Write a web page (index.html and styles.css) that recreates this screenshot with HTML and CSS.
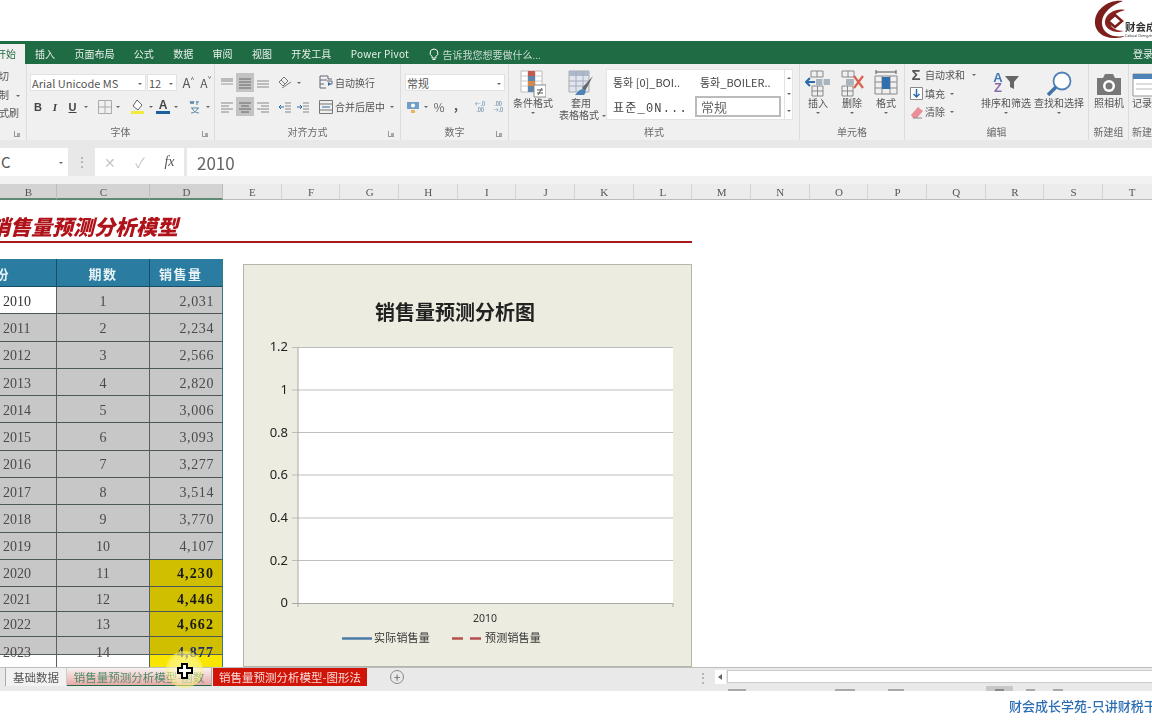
FILE: index.html
```html
<!DOCTYPE html>
<html lang="zh-CN">
<head>
<meta charset="utf-8">
<title>销售量预测分析模型</title>
<link rel="stylesheet" href="styles.css">
</head>
<body>
<div class="page">
  <header class="topbar">
    <div class="logo">
      <svg width="34" height="40" viewBox="0 0 34 40"><path d="M29 1C16-1 2 8 1 21c-1 10 8 18 21 17 4 0 7-1 9-2-12 2-22-2-23-12C7 14 17 5 29 1z" fill="#7c1f1c"/><path d="M31 10C21 8 12 14 11 21c-1 6 5 11 14 11l5-1c-7 0-14-3-14-9 0-5 7-10 15-12z" fill="#8a2320"/><path d="M21 15l7 6-7 6-7-6z" fill="none" stroke="#7c1f1c" stroke-width="2.5"/></svg>
      <div class="logo-text"><span class="logo-cn">财会成</span><span class="logo-en">Caikuai Chengzhang</span></div>
    </div>
  </header>

  <nav class="tabs">
    <span class="tab active">开始</span>
    <span class="tab">插入</span><span class="tab">页面布局</span><span class="tab">公式</span><span class="tab">数据</span><span class="tab">审阅</span><span class="tab">视图</span><span class="tab">开发工具</span><span class="tab">Power Pivot</span>
    <span class="tell">
      <svg width="10" height="13" viewBox="0 0 10 13"><path d="M5 1a4 4 0 0 0-2 7.400V10h4V8.400A4 4 0 0 0 5 1zM3.500 11.500h3" fill="none" stroke="#fff" stroke-width="1"/></svg>
      告诉我您想要做什么...
    </span>
    <span class="login">登录</span>
  </nav>

  <section class="ribbon">
    <div class="grp g-clip">
      <div class="clip-list"><span>切</span><span>制<i class="caret cl"></i></span><span>式刷</span></div>
      <i class="launch"></i>
    </div>

    <div class="grp g-font">
      <div class="body pl3">
        <div class="row">
          <span class="select w116">Arial Unicode MS<i class="caret"></i></span>
          <span class="select w30">12<i class="caret"></i></span>
          <span class="b w21 big">A<sup>^</sup></span>
          <span class="b w14 mid">A<sup>ˇ</sup></span>
        </div>
        <div class="row">
          <span class="b w16 bold">B</span><span class="b w18 ital">I</span><span class="b w17 under">U</span><i class="b w10 caret"></i>
          <span class="w6"></span>
          <span class="b w16"><svg width="14" height="14" viewBox="0 0 14 14"><path d="M.5.500h13v13H.5zM7 .5v13M.5 7h13" fill="none" stroke="#aaa"/></svg></span><i class="b w10 caret"></i>
          <span class="w7"></span>
          <span class="b w16"><svg width="16" height="16" viewBox="0 0 16 16"><path d="M7 1l5 5-4 5-5-4z" fill="#fff" stroke="#666"/><path d="M1 12h13v3H1z" fill="#f2ea3a"/></svg></span><i class="b w9 caret"></i>
          <span class="b w16"><svg width="14" height="16" viewBox="0 0 14 16"><text x="7" y="10" text-anchor="middle" class="svg-a">A</text><path d="M0 12h14v3H0z" fill="#1f5f9e"/></svg></span><i class="b w10 caret"></i>
          <span class="w6"></span>
          <span class="b w16 wen"><svg width="14" height="15" viewBox="0 0 14 15"><path d="M2 2l1 3 1-3 1 3 1-3M9 2v4M8 3h3M3 9h8M4 9c1 3 4 5 7 5M10 9c-1 3-4 5-7 5" fill="none" stroke="#5b87a8"/></svg></span><i class="b w10 caret"></i>
        </div>
      </div>
      <div class="label">字体</div><i class="launch"></i>
    </div>

    <div class="grp g-align">
      <div class="body pl3">
        <div class="row">
          <span class="b w18"><svg class="al" viewBox="0 0 14 12"><path d="M1 1h12v4H1z" fill="#bbb"/><path d="M1 7h12" stroke="#999"/></svg></span>
          <span class="b w18 on"><svg class="al" viewBox="0 0 14 12"><path d="M1 2h12M1 5h12M1 8h12M1 11h12" stroke="#666"/></svg></span>
          <span class="b w18"><svg class="al" viewBox="0 0 14 12"><path d="M1 4h12M1 7h12M1 10h12" stroke="#888"/></svg></span>
          <span class="w4"></span>
          <span class="b w18"><svg width="14" height="14" viewBox="0 0 14 14"><path d="M1 6l5-5 4 4-5 5zM4 12l9-6M3 4l4 4" fill="none" stroke="#777"/></svg></span><i class="b w10 caret"></i>
          <span class="w14"></span>
          <span class="b w16"><svg width="14" height="15" viewBox="0 0 14 15"><path d="M1 1h8v3h4M1 5h7M1 9h4M1 13h6M1 1v12M8 6h5v3H9" fill="none" stroke="#667"/><path d="M9 7l3 2-3 2z" fill="#2b6ca8"/></svg></span>
          <span class="txt">自动换行</span>
        </div>
        <div class="row">
          <span class="b w18"><svg class="al" viewBox="0 0 14 12"><path d="M1 2h12M1 5h8M1 8h12M1 11h8" stroke="#888"/></svg></span>
          <span class="b w18 on"><svg class="al" viewBox="0 0 14 12"><path d="M1 2h12M3 5h8M1 8h12M3 11h8" stroke="#666"/></svg></span>
          <span class="b w18"><svg class="al" viewBox="0 0 14 12"><path d="M1 2h12M5 5h8M1 8h12M5 11h8" stroke="#888"/></svg></span>
          <span class="w4"></span>
          <span class="b w18"><svg class="al" viewBox="0 0 14 12"><path d="M7 2h6M7 5h6M7 8h6M7 11h6" stroke="#888"/><path d="M6 6H1M3 4L1 6l2 2" fill="none" stroke="#2b6ca8"/></svg></span>
          <span class="b w18"><svg class="al" viewBox="0 0 14 12"><path d="M7 2h6M7 5h6M7 8h6M7 11h6" stroke="#888"/><path d="M1 6h5M4 4l2 2-2 2" fill="none" stroke="#2b6ca8"/></svg></span>
          <span class="w6"></span>
          <span class="b w16"><svg width="14" height="14" viewBox="0 0 14 14"><path d="M.5.500h13v13H.5zM.5 4h13M.5 10h13" fill="none" stroke="#777"/><path d="M3 7h8" stroke="#2b6ca8"/></svg></span>
          <span class="txt">合并后居中</span><i class="b w14 caret"></i>
        </div>
      </div>
      <div class="label">对齐方式</div><i class="launch"></i>
    </div>

    <div class="grp g-num">
      <div class="body pl4">
        <div class="row"><span class="select w100">常规<i class="caret"></i></span></div>
        <div class="row">
          <span class="b w16"><svg width="14" height="14" viewBox="0 0 14 14"><path d="M1 2h12v7H1z" fill="#6f9fc4"/><circle cx="7" cy="5.500" r="2" fill="#fff"/><path d="M5 10h4v3H5z" fill="#e8b45c"/></svg></span><i class="b w10 caret"></i>
          <span class="b w16 pct">%</span><span class="b w18 comma">,</span>
          <span class="w6"></span>
          <span class="b w18 dec"><b>←.0</b><b>.00</b></span><span class="b w18 dec"><b>.00</b><b>→.0</b></span>
        </div>
      </div>
      <div class="label">数字</div><i class="launch"></i>
    </div>

    <div class="grp g-styles">
      <div class="body flexrow">
        <div class="big-btn w48">
          <svg width="26" height="28" viewBox="0 0 26 28"><path d="M1 1h21v21H1z" fill="#fff" stroke="#bbb"/><path d="M8 1v21M15 1v21M1 6h21M1 11h21M1 16h21" stroke="#ccc"/><path d="M8 1h7v5H8z" fill="#c55b4a"/><path d="M8 6h7v5H8z" fill="#5e86ad"/><path d="M8 11h7v5H8z" fill="#d4884c"/><path d="M8 16h7v6H8z" fill="#5e86ad"/><path d="M14 15h12v12H14z" fill="#fff" stroke="#888"/><path d="M17 20h6M17 23h6M22 18l-4 7" stroke="#555" fill="none"/></svg>
          <span>条件格式</span><i class="caret"></i>
        </div>
        <div class="big-btn w48">
          <svg width="26" height="28" viewBox="0 0 26 28"><path d="M1 1h20v21H1z" fill="#dfe6ef" stroke="#aaa"/><path d="M1 1h20v5H1z" fill="#aab9cb"/><path d="M8 1v21M15 1v21M1 11h20M1 16h20" stroke="#aab"/><path d="M25 6L14 18l3 3z" fill="#666"/><path d="M15 19c-3 0-5 2-8 6h9c2-2 2-4 1-5z" fill="#4f83b8"/></svg>
          <span>套用</span><span class="nowrap-cap">表格格式<i class="caret cl"></i></span>
        </div>
        <div class="gallery">
          <div class="gal-grid">
            <span class="kr">통화 [0]_BOI..</span><span class="kr">통화_BOILER..</span>
            <span class="kr serif">표준_0N...</span><span class="plain">常规</span>
          </div>
          <div class="gal-scroll"><i class="caret up"></i><i class="caret"></i><i class="caret"></i></div>
        </div>
      </div>
      <div class="label">样式</div>
    </div>

    <div class="grp g-cells">
      <div class="body flexrow pl1">
        <div class="big-btn w34">
          <svg width="26" height="28" viewBox="0 0 26 28"><path d="M6 1h12v6H6zM12 1v6M7 16h11v10H7zM12.500 16v10M7 21h11" fill="none" stroke="#888"/><path d="M11 9h14v6H11z" fill="#aab4be"/><path d="M18 9v6" stroke="#fff"/><path d="M1 12h9M5 8l-4 4 4 4" fill="none" stroke="#2b6ca8" stroke-width="2"/></svg>
          <span>插入</span><i class="caret"></i>
        </div>
        <div class="big-btn w34">
          <svg width="26" height="28" viewBox="0 0 26 28"><path d="M3 1h12v6H3zM9 1v6M3 16h11v10H3zM8.500 16v10M3 21h11" fill="none" stroke="#888"/><path d="M7 9h8v6H7z" fill="#aab4be"/><path d="M15 6l9 12M24 6l-9 12" stroke="#d9614f" stroke-width="2.200"/></svg>
          <span>删除</span><i class="caret"></i>
        </div>
        <div class="big-btn w34">
          <svg width="24" height="28" viewBox="0 0 24 28"><path d="M1 6h22v18H1zM8 6v18M16 6v18M1 12h22M1 18h22" fill="none" stroke="#888"/><path d="M8 7h8v12H8z" fill="#2f6fae"/><path d="M2 2h20M2 0v4M22 0v4" stroke="#555"/></svg>
          <span>格式</span><i class="caret"></i>
        </div>
      </div>
      <div class="label">单元格</div>
    </div>

    <div class="grp g-edit">
      <div class="body flexrow pl4">
        <div class="edit-list">
          <span><b class="sigma">Σ</b>自动求和<i class="caret cl2"></i></span>
          <span><svg width="13" height="13" viewBox="0 0 13 13"><path d="M.5.500h12v12H.5z" fill="#fff" stroke="#888"/><path d="M6.500 2v8M3.500 7l3 3 3-3" fill="none" stroke="#2b6ca8" stroke-width="1.500"/></svg>填充<i class="caret cl"></i></span>
          <span><svg width="13" height="13" viewBox="0 0 13 13"><path d="M8 1l5 4-6 7H3L1 9z" fill="#eb8f97"/><path d="M3 12h9" stroke="#888"/></svg>清除<i class="caret cl"></i></span>
        </div>
        <div class="big-btn w50">
          <svg width="30" height="28" viewBox="0 0 30 28"><text x="7" y="12" class="az az-a">A</text><text x="7" y="22" class="az az-z">Z</text><path d="M14 6h14l-5 6v7l-4-2v-5z" fill="#666"/></svg>
          <span>排序和筛选</span><i class="caret"></i>
        </div>
        <div class="big-btn w50 ml3">
          <svg width="28" height="28" viewBox="0 0 28 28"><circle cx="17" cy="11" r="8.500" fill="#fff" stroke="#4f83b8" stroke-width="1.800"/><path d="M11 17l-8 8" stroke="#3f73a8" stroke-width="3.500"/></svg>
          <span>查找和选择</span><i class="caret"></i>
        </div>
      </div>
      <div class="label">编辑</div>
    </div>

    <div class="grp g-cam">
      <div class="body"><div class="big-btn w40">
        <svg width="26" height="28" viewBox="0 0 26 28"><path d="M1 8h24v17H1z" fill="#777"/><path d="M7 8l2-4h8l2 4z" fill="#777"/><circle cx="13" cy="16" r="6" fill="#fff"/><circle cx="13" cy="16" r="3.500" fill="#777"/></svg>
        <span>照相机</span>
      </div></div>
      <div class="label">新建组</div>
    </div>

    <div class="grp g-last">
      <div class="body"><div class="big-btn w40 lead">
        <svg width="26" height="28" viewBox="0 0 26 28"><path d="M1 4h24v22H1z" fill="#fff" stroke="#999"/><path d="M1 4h24v5H1z" fill="#4f83b8"/><path d="M4 14h18M4 19h18" stroke="#bbb"/></svg>
        <span>记录</span>
      </div></div>
      <div class="label lead-label">新建</div>
    </div>
  </section>

  <section class="formula">
    <div class="namebox">C<i class="caret"></i></div>
    <div class="fdots">⋮</div>
    <div class="fbtns"><span class="x">✕</span><span class="x">✓</span><span class="fx">fx</span></div>
    <div class="finput">2010</div>
  </section>

  <div class="colhead">
    <span class="ch sel c-b">B</span><span class="ch sel c-c">C</span><span class="ch sel c-d">D</span>
    <span class="ch">E</span><span class="ch">F</span><span class="ch">G</span><span class="ch">H</span><span class="ch">I</span><span class="ch">J</span><span class="ch">K</span><span class="ch">L</span><span class="ch">M</span><span class="ch">N</span><span class="ch">O</span><span class="ch">P</span><span class="ch">Q</span><span class="ch">R</span><span class="ch">S</span><span class="ch">T</span>
  </div>

  <main class="sheet">
    <div class="sheet-title"><h1>销售量预测分析模型</h1></div>
    <div class="grid">
      <div class="th y"><span>年份</span></div><div class="th">期数</div><div class="th sales">销售量</div>
      <div class="td y first">2010</div><div class="td m">1</div><div class="td n">2,031</div>
      <div class="td y">2011</div><div class="td m">2</div><div class="td n">2,234</div>
      <div class="td y">2012</div><div class="td m">3</div><div class="td n">2,566</div>
      <div class="td y">2013</div><div class="td m">4</div><div class="td n">2,820</div>
      <div class="td y">2014</div><div class="td m">5</div><div class="td n">3,006</div>
      <div class="td y">2015</div><div class="td m">6</div><div class="td n">3,093</div>
      <div class="td y">2016</div><div class="td m">7</div><div class="td n">3,277</div>
      <div class="td y">2017</div><div class="td m">8</div><div class="td n">3,514</div>
      <div class="td y">2018</div><div class="td m">9</div><div class="td n">3,770</div>
      <div class="td y">2019</div><div class="td m">10</div><div class="td n">4,107</div>
      <div class="td y">2020</div><div class="td m">11</div><div class="td n fc">4,230</div>
      <div class="td y">2021</div><div class="td m">12</div><div class="td n fc">4,446</div>
      <div class="td y">2022</div><div class="td m">13</div><div class="td n fc">4,662</div>
      <div class="td y cut">2023</div><div class="td m cut">14</div><div class="td n fc cut2">4,877</div>
    </div>

    <div class="chart">
      <svg width="449" height="403" viewBox="243 264 449 403">
        <text x="455" y="320" text-anchor="middle" class="c-title">销售量预测分析图</text>
        <rect x="298" y="347" width="375" height="256" fill="#fff"/>
        <path class="c-grid" d="M292 347.500h381M292 390h381M292 432.500h381M292 475h381M292 518h381M292 560.500h381"/>
        <path class="c-axis" d="M292 603.500h381M298 347v260M673 603v4"/>
        <g class="c-y">
          <text x="288" y="351">1.2</text><text x="288" y="394">1</text><text x="288" y="437">0.8</text><text x="288" y="479">0.6</text><text x="288" y="522">0.4</text><text x="288" y="565">0.2</text><text x="288" y="607">0</text>
        </g>
        <text x="485" y="622" text-anchor="middle" class="c-x">2010</text>
        <path d="M342 638.500h30" stroke="#4a7ba7" stroke-width="2.500"/>
        <text x="374" y="642" class="c-leg">实际销售量</text>
        <path d="M452 638.500h11M470 638.500h11" stroke="#b5504f" stroke-width="2.500"/>
        <text x="485" y="642" class="c-leg">预测销售量</text>
      </svg>
    </div>
  </main>

  <footer class="sheetbar">
    <span class="stab s1">基础数据</span>
    <span class="stab s2">销售量预测分析模型-函数</span>
    <span class="stab s3">销售量预测分析模型-图形法</span>
    <span class="plus">+</span>
    <span class="sdots">⋮</span>
    <span class="sarrow"><i></i></span>
    <span class="strack"></span>
  </footer>
  <div class="status">
    <span class="mark m1"></span><span class="mark m2"></span><span class="mark m3"></span>
    <span class="v-on"></span><span class="mark m4"></span><span class="mark m5"></span><span class="mark m6"></span>
  </div>
  <div class="watermark">财会成长学苑-只讲财税干货</div>

  <div class="spot"></div>
  <svg class="cursor" width="16" height="16" viewBox="0 0 16 16"><path d="M5 1h5v4h5v5h-5v5H5v-5H1V5h4z" fill="#fff" stroke="#000" stroke-width="2"/></svg>
</div>
</body>
</html>
```

FILE: styles.css
```css
* { box-sizing: border-box; }
html, body { margin: 0; padding: 0; background: #fff; }
body { width: 1152px; height: 720px; overflow: hidden; }
.page {
  position: relative; width: 1152px; height: 720px; overflow: hidden;
  font-family: "Noto Sans CJK SC", "Noto Sans", sans-serif; font-size: 10px; color: #555;
  filter: blur(.35px);
}
i { font-style: normal; }

/* top */
.topbar { height: 41px; display: flex; justify-content: flex-end; background: #fff; }
.logo { display: flex; width: 58px; flex: none; }
.logo svg { flex: none; }
.logo-text { display: flex; flex-direction: column; white-space: nowrap; padding-top: 21px; margin-left: -3px; overflow: hidden; }
.logo-cn { font-size: 10.500px; line-height: 12px; font-weight: 700; color: #333; }
.logo-en { font-size: 3.500px; line-height: 5px; color: #333; }

.tabs { height: 23px; background: #1f6b43; display: flex; align-items: center; gap: 19.400px; color: #e9f0ec; position: relative; white-space: nowrap; padding-left: 35px; padding-top: 3px; }
.tab { line-height: 20px; }
.tab:nth-child(9) { letter-spacing: .25px; }
.tab.active { background: #f0f0f0; color: #1f6b43; width: 25px; height: 20px; margin: 0 -9.400px 0 -35px; align-self: flex-end; text-align: right; padding-right: 9px; overflow: hidden; direction: rtl; }
.tell { display: flex; align-items: center; gap: 4px; color: #c9dcd2; }
.login { position: absolute; left: 1133px; top: 3px; line-height: 20px; }

/* ribbon */
.ribbon { height: 76px; background: #f0f0f0; display: flex; white-space: nowrap; }
.grp { position: relative; flex: none; display: flex; flex-direction: column; height: 76px; border-right: 1px solid #dcdcdc; padding-bottom: 2px; }
.g-clip { width: 27px; } .g-font { width: 188px; } .g-align { width: 186px; } .g-num { width: 108px; } .g-styles { width: 291px; }
.g-cells { width: 105px; } .g-edit { width: 184px; } .g-cam { width: 40px; } .g-last { width: 23px; border: 0; overflow: hidden; }
.body { flex: 1; height: 60px; min-height: 0; }
.label { height: 13px; line-height: 13px; text-align: center; color: #6a6a6a; }
.flexrow { display: flex; }
.pl1 { padding-left: 1px; } .pl3 { padding-left: 3px; } .pl4 { padding-left: 4px; }
.ml3 { margin-left: 3px; }
.launch { position: absolute; right: 6px; bottom: 3px; width: 6px; height: 6px; border-left: 1px solid #999; border-bottom: 1px solid #999; }
.launch::after { content: ""; position: absolute; right: 0; bottom: 0; width: 3px; height: 3px; background: #aaa; }

.row { display: flex; align-items: center; height: 19px; margin-top: 9px; }
.row + .row { margin-top: 5px; }
.b { display: flex; flex: none; align-items: center; justify-content: center; height: 19px; }
.w4 { width: 4px; flex: none; } .w6 { width: 6px; flex: none; } .w7 { width: 7px; flex: none; } .w9 { width: 9px; }
.w10 { width: 10px; } .w14 { width: 14px; flex: none; } .w16 { width: 16px; } .w17 { width: 17px; } .w18 { width: 18px; } .w21 { width: 21px; }
.w30 { width: 30px; } .w34 { width: 34px; } .w40 { width: 40px; } .w48 { width: 48px; } .w50 { width: 50px; } .w100 { width: 100px; } .w116 { width: 116px; }
.caret { display: inline-block; position: relative; }
.caret::after { content: ""; position: absolute; left: 50%; top: 50%; margin: -1px 0 0 -2px; border: 2px solid transparent; border-top: 2.500px solid #666; border-bottom: 0; }
i.b.caret { display: block; }
.caret.up::after { border-top: 0; border-bottom: 2.500px solid #666; }
.cl { width: 10px; height: 10px; vertical-align: middle; }
.cl2 { width: 14px; height: 10px; flex: none; }
.clip-list .cl { width: 18px; }

.select { display: flex; flex: none; align-items: center; height: 17px; background: #fff; border: 1px solid #e2e2e2; padding-left: 1px; font-size: 11px; color: #555; position: relative; margin-right: 1px; }
.select .caret { position: absolute; right: 3px; top: 7px; width: 4px; height: 3px; }
.big { font-size: 13px; }
.mid { font-size: 12px; }
.big sup, .mid sup { font-size: 7px; line-height: 0; margin-top: -8px; }
.bold { font-weight: 700; font-size: 11px; font-family: "Liberation Sans", sans-serif; color: #444; }
.ital { font-style: italic; font-weight: 700; font-size: 11px; font-family: "Liberation Serif", serif; color: #444; }
.under { font-weight: 700; font-size: 11px; text-decoration: underline; font-family: "Liberation Sans", sans-serif; color: #444; }
.svg-a { font: 700 12px "Liberation Sans", sans-serif; fill: #444; }
.al { width: 14px; height: 12px; }
.on { background: #c3c3c3; }
.txt { line-height: 19px; padding-left: 1px; }
.pct { font-size: 12px; color: #666; }
.comma { font-weight: 700; font-size: 12px; margin-top: -4px; }
.dec { flex-direction: column; font-size: 5.500px; line-height: 6px; }
.dec b { font-weight: 400; color: #4c7ca3; }

.big-btn { display: flex; flex-direction: column; align-items: center; flex: none; padding-top: 6px; line-height: 12px; }
.big-btn svg { height: 28px; flex: none; margin-bottom: -1px; }
.big-btn > .caret { width: 8px; height: 8px; }
.big-btn.lead { align-items: flex-start; padding-left: 3px; }
.lead-label { text-align: left; padding-left: 3px; }
.nowrap-cap { margin-right: -6px; }
.gallery { display: flex; width: 187px; height: 51px; margin: 5px 0 0 1px; background: #fff; flex: none; border: 1px solid #e4e4e4; }
.gal-grid { flex: 1; display: grid; grid-template-columns: 87px 90px; grid-template-rows: 24px 25px; align-items: center; }
.kr { font-family: "Noto Sans CJK KR", sans-serif; font-size: 11px; padding-left: 6px; color: #444; }
.kr.serif { font-family: "Liberation Mono", "Noto Sans CJK KR", monospace; font-size: 12px; letter-spacing: 1.200px; }
.plain { width: 86px; height: 21px; margin-left: 1px; border: 2px solid #bbb; line-height: 17px; padding-left: 4px; font-size: 13px; color: #666; }
.gal-scroll { width: 10px; display: grid; grid-template-rows: 1fr 1fr 1fr; border-left: 1px solid #e2e2e2; }

.clip-list { display: flex; flex-direction: column; padding-top: 3px; line-height: 18.500px; }
.clip-list span { margin-left: -1px; }
.edit-list { width: 72px; flex: none; display: flex; flex-direction: column; padding-top: 2px; line-height: 18px; }
.edit-list span { display: flex; align-items: center; gap: 2px; height: 18.500px; }
.edit-list svg { margin: 0 0 0 1px; flex: none; }
.sigma { width: 14px; flex: none; font-size: 15px; font-weight: 700; text-align: center; color: #555; font-family: "Liberation Sans", sans-serif; }
.az { font: 700 13px "Liberation Sans", sans-serif; text-anchor: middle; }
.az-a { fill: #3f78b5; } .az-z { fill: #8a6aa8; }

/* formula */
.formula { height: 36px; padding-top: 8px; background: #e8e8e8; display: flex; align-items: stretch; }
.namebox { width: 68px; background: #fff; font-size: 15px; line-height: 28px; padding-left: 1px; color: #555; position: relative; flex: none; }
.namebox .caret { position: absolute; right: 5px; top: 13px; width: 4px; height: 4px; }
.fdots { width: 27px; text-align: center; line-height: 26px; font-size: 12px; color: #999; flex: none; }
.fbtns { width: 89px; background: #fff; display: flex; align-items: center; flex: none; margin-right: 3px; }
.x { width: 30px; text-align: center; font-size: 14px; color: #c6c6c6; }
.fx { width: 29px; text-align: center; font: italic 14px "Liberation Serif", serif; color: #555; }
.finput { flex: 1; background: #fff; font-size: 17px; line-height: 29px; padding-left: 10px; color: #666; }

.colhead { height: 24px; padding-top: 8px; background: #f2f2f2; display: flex; }
.ch { width: 58.670px; flex: none; height: 16px; line-height: 16px; padding-left: 1px; text-align: center; font-size: 11px; font-family: "Liberation Serif", serif; color: #555; background: #ececec; border-right: 1px solid #d4d4d4; border-bottom: 1px solid #bbb; }
.ch.sel { background: #d3d3d3; border-right-color: #bdbdbd; border-bottom: 2px solid #5f8a76; }
.c-b { width: 57px; } .c-c { width: 93px; } .c-d { width: 73px; }

/* sheet */
.sheet { position: relative; height: 467px; background: #fff; overflow: hidden; }
.sheet-title { height: 43px; width: 692px; border-bottom: 2px solid #a8191a; margin-bottom: 16px; padding-top: 11px; }
.sheet-title h1 { margin: 0 0 0 -11px; font-size: 21px; line-height: 30px; font-weight: 900; font-style: italic; color: #b0121a; white-space: nowrap; }
.grid { display: grid; width: 223px; grid-template-columns: 57px 93px 73px; grid-template-rows: 28px repeat(10, 27.300px) 27px 25px 25px 30px; }
.th { background: #2a7ca0; border-right: 1.500px solid #174e66; border-bottom: 1px solid #174e66; color: #e8f2f6; font-size: 13px; font-weight: 700; letter-spacing: 1.500px; display: flex; align-items: center; justify-content: center; padding-top: 1px; }
.th.y { justify-content: flex-start; }
.th.y span { margin-left: -19px; white-space: nowrap; }
.th.sales { justify-content: flex-start; padding-left: 9px; border-right-color: #3a7a7a; }
.td { background: #c8c7c7; border-right: 1.500px solid #5a6163; border-bottom: 1px solid #4d5658; display: flex; align-items: center; padding-top: 3px; font-family: "Liberation Serif", serif; font-size: 14px; color: #4a4a4a; }
.td.y { padding-left: 3px; }
.td.first { background: #fff; color: #333; }
.td.m { justify-content: center; }
.td.n { justify-content: flex-end; padding-right: 8px; letter-spacing: .6px; border-right: 1px solid #3a7a7a; }
.td.fc { background: #d0bf00; color: #1a1a1a; font-weight: 700; letter-spacing: 1.100px; }
.td.cut, .td.cut2 { align-items: flex-start; padding-top: 8px; border-bottom: 0; }
.td.cut { background: linear-gradient(#c8c7c7 17px, #55605f 17px, #55605f 18px, #fff 18px); }
.td.cut2 { background: linear-gradient(#d0bf00 17px, #55605f 17px, #55605f 18px, #f8e600 18px); color: #232f6a; }

.chart { position: absolute; left: 243px; top: 64px; width: 449px; height: 403px; background: #edece0; outline: 1px solid #b5b5aa; outline-offset: -1px; }
.chart svg { display: block; }
.c-title { font-size: 20px; fill: #222; font-weight: 700; }
.c-grid { stroke: #bdbdbd; fill: none; stroke-width: 1; }
.c-axis { stroke: #a8a8a8; fill: none; }
.c-y text { font: 13px "Noto Sans", sans-serif; fill: #222; text-anchor: end; }
.c-x { font: 10.500px "Noto Sans", sans-serif; fill: #333; }
.c-leg { font-size: 11px; fill: #333; letter-spacing: .2px; }

/* sheet tabs */
.sheetbar { height: 19px; background: #e9e9e9; border-top: 1px solid #bdbdbd; display: flex; align-items: stretch; white-space: nowrap; font-size: 11.500px; padding-left: 5px; }
.stab { display: flex; align-items: center; justify-content: center; flex: none; }
.s1 { width: 62px; background: #f2f2f2; border-left: 1px solid #aaa; border-right: 1px solid #ccc; color: #555; }
.s2 { width: 145px; background: linear-gradient(#f7f2f2, #e9a9a6); color: #4f8a68; border-bottom: 1px solid #1f6b43; border-right: 1px solid #aaa; margin-right: 1px; }
.s3 { width: 154px; background: #d01408; color: #f7dcd8; }
.plus { width: 14px; height: 14px; margin: 2px 0 0 23px; border: 1px solid #888; border-radius: 50%; line-height: 11px; text-align: center; font-size: 12px; color: #666; flex: none; }
.sdots { width: 14px; margin-left: 292px; line-height: 18px; text-align: center; color: #999; flex: none; }
.sarrow { position: relative; width: 11px; margin: 2px 0 2px 5px; background: #fff; flex: none; }
.sarrow i { position: absolute; left: 3px; top: 4px; border: 3.500px solid transparent; border-right: 4px solid #666; border-left: 0; }
.strack { flex: 1; margin: 2px 0 3px 1px; background: #fff; border: 1px solid #ccc; border-right: 0; }
.status { height: 5px; background: #e9e9e9; position: relative; overflow: hidden; }
.v-on { position: absolute; left: 986px; top: 0; width: 27px; height: 5px; background: #c8c8c8; }
.mark { position: absolute; top: 3px; height: 2px; background: #a9a9a9; }
.m1 { left: 728px; width: 18px; } .m2 { left: 835px; width: 20px; } .m3 { left: 888px; width: 16px; }
.m4 { left: 995px; top: 3px; width: 9px; background: #888; } .m5 { left: 1026px; width: 9px; } .m6 { left: 1053px; width: 10px; }
.watermark { position: absolute; left: 1009px; top: 697px; font-size: 13px; line-height: 18px; font-weight: 500; color: #2c6eb3; white-space: nowrap; }

/* recording cursor */
.spot { position: absolute; left: 166px; top: 651px; width: 37px; height: 37px; border-radius: 50%; background: radial-gradient(circle, rgba(255,255,235,.6) 0, rgba(255,250,170,.55) 55%, rgba(250,235,40,.65) 85%, rgba(250,235,40,.12) 100%); }
.cursor { position: absolute; left: 177px; top: 663px; }
```
